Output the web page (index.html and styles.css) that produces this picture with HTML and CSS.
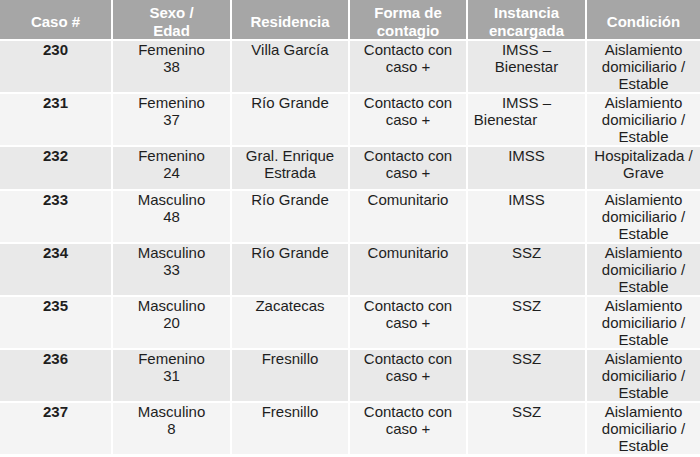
FILE: index.html
```html
<!DOCTYPE html>
<html lang="es">
<head>
<meta charset="utf-8">
<title>Casos</title>
<link rel="stylesheet" href="styles.css">
</head>
<body>
<div class="table">
  <div class="row head">
    <div class="cell">Caso #</div>
    <div class="cell">Sexo /<br>Edad</div>
    <div class="cell">Residencia</div>
    <div class="cell">Forma de<br>contagio</div>
    <div class="cell">Instancia<br>encargada</div>
    <div class="cell">Condición</div>
  </div>
  <div class="row dark">
    <div class="cell num">230</div>
    <div class="cell">Femenino<br>38</div>
    <div class="cell">Villa García</div>
    <div class="cell">Contacto con<br>caso +</div>
    <div class="cell">IMSS –<br>Bienestar</div>
    <div class="cell">Aislamiento<br>domiciliario /<br>Estable</div>
  </div>
  <div class="row light">
    <div class="cell num">231</div>
    <div class="cell">Femenino<br>37</div>
    <div class="cell">Río Grande</div>
    <div class="cell">Contacto con<br>caso +</div>
    <div class="cell">IMSS –<br><span class="shift">Bienestar</span></div>
    <div class="cell">Aislamiento<br>domiciliario /<br>Estable</div>
  </div>
  <div class="row dark">
    <div class="cell num">232</div>
    <div class="cell">Femenino<br>24</div>
    <div class="cell">Gral. Enrique<br>Estrada</div>
    <div class="cell">Contacto con<br>caso +</div>
    <div class="cell">IMSS</div>
    <div class="cell">Hospitalizada /<br>Grave</div>
  </div>
  <div class="row light">
    <div class="cell num">233</div>
    <div class="cell">Masculino<br>48</div>
    <div class="cell">Río Grande</div>
    <div class="cell">Comunitario</div>
    <div class="cell">IMSS</div>
    <div class="cell">Aislamiento<br>domiciliario /<br>Estable</div>
  </div>
  <div class="row dark">
    <div class="cell num">234</div>
    <div class="cell">Masculino<br>33</div>
    <div class="cell">Río Grande</div>
    <div class="cell">Comunitario</div>
    <div class="cell">SSZ</div>
    <div class="cell">Aislamiento<br>domiciliario /<br>Estable</div>
  </div>
  <div class="row light">
    <div class="cell num">235</div>
    <div class="cell">Masculino<br>20</div>
    <div class="cell">Zacatecas</div>
    <div class="cell">Contacto con<br>caso +</div>
    <div class="cell">SSZ</div>
    <div class="cell">Aislamiento<br>domiciliario /<br>Estable</div>
  </div>
  <div class="row dark">
    <div class="cell num">236</div>
    <div class="cell">Femenino<br>31</div>
    <div class="cell">Fresnillo</div>
    <div class="cell">Contacto con<br>caso +</div>
    <div class="cell">SSZ</div>
    <div class="cell">Aislamiento<br>domiciliario /<br>Estable</div>
  </div>
  <div class="row light">
    <div class="cell num">237</div>
    <div class="cell">Masculino<br>8</div>
    <div class="cell">Fresnillo</div>
    <div class="cell">Contacto con<br>caso +</div>
    <div class="cell">SSZ</div>
    <div class="cell">Aislamiento<br>domiciliario /<br>Estable</div>
  </div>
</div>
</body>
</html>
```
FILE: styles.css
```css
html, body {
  margin: 0;
  padding: 0;
  background: #ffffff;
}

body {
  font-family: "Liberation Sans", Arial, sans-serif;
  font-size: 15px;
  color: #1e1e1e;
}

.table {
  display: grid;
  width: 700px;
  grid-template-columns: 111px 117px 116px 116px 117px 113px;
  grid-template-rows: 39px;
  grid-auto-rows: minmax(42px, auto);
  column-gap: 2px;
  row-gap: 2px;
  background: #ffffff;
}

.row {
  display: contents;
}

.cell {
  text-align: center;
  line-height: 17px;
  padding: 0 2px;
}

.head .cell {
  background: #a6a6a6;
  color: #ffffff;
  font-weight: bold;
  display: flex;
  flex-direction: column;
  justify-content: center;
  padding-top: 4px;
  line-height: 17.5px;
}

.dark .cell {
  background: #e9e9e9;
}

.light .cell {
  background: #f4f4f4;
}

.num {
  font-weight: bold;
}

.shift {
  margin-right: 42px;
}
```
